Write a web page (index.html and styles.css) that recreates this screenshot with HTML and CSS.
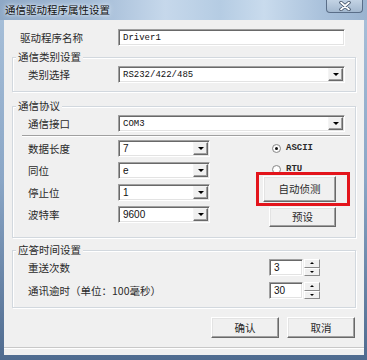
FILE: index.html
```html
<!DOCTYPE html>
<html>
<head>
<meta charset="utf-8">
<link rel="stylesheet" href="styles.css">
</head>
<body>
<div class="window">
  <div class="titlebar">
    <span class="title">通信驱动程序属性设置</span>
    <span class="close"><svg width="14" height="10" viewBox="0 0 14 10"><path d="M3 1.5 L11 8.5 M11 1.5 L3 8.5" stroke="#3a4a60" stroke-width="3.4" stroke-linecap="round"/><path d="M3 1.5 L11 8.5 M11 1.5 L3 8.5" stroke="#ffffff" stroke-width="1.8" stroke-linecap="round"/></svg></span>
  </div>
  <div class="client">
    <div class="row name-row">
      <span class="label name-label">驱动程序名称</span>
      <div class="edit wide"><span class="val mono">Driver1</span></div>
    </div>

    <div class="group g1">
      <div class="legend">通信类别设置</div>
      <div class="row">
        <span class="label">类别选择</span>
        <div class="combo wide"><span class="val mono">RS232/422/485</span><span class="drop"></span></div>
      </div>
    </div>

    <div class="group g2">
      <div class="legend">通信协议</div>
      <div class="row">
        <span class="label">通信接口</span>
        <div class="combo wide"><span class="val mono">COM3</span><span class="drop"></span></div>
      </div>
      <div class="separator"></div>
      <div class="split">
        <div class="leftcol">
          <div class="row">
            <span class="label">数据长度</span>
            <div class="combo narrow"><span class="val sans">7</span><span class="drop"></span></div>
          </div>
          <div class="row">
            <span class="label">同位</span>
            <div class="combo narrow"><span class="val sans">e</span><span class="drop"></span></div>
          </div>
          <div class="row">
            <span class="label">停止位</span>
            <div class="combo narrow"><span class="val sans">1</span><span class="drop"></span></div>
          </div>
          <div class="row">
            <span class="label">波特率</span>
            <div class="combo narrow"><span class="val sans">9600</span><span class="drop"></span></div>
          </div>
        </div>
        <div class="rightcol">
          <div class="radio-row first"><span class="radio checked"></span><span class="radio-text">ASCII</span></div>
          <div class="radio-row second"><span class="radio"></span><span class="radio-text">RTU</span></div>
          <div class="button detect">自动侦测</div>
          <div class="button preset">预设</div>
        </div>
      </div>
      <div class="highlight"></div>
    </div>

    <div class="group g3">
      <div class="legend">应答时间设置</div>
      <div class="row">
        <span class="label">重送次数</span>
        <div class="spin"><div class="spin-edit"><span class="val sans">3</span></div><div class="spin-btns"><span class="sb up"></span><span class="sb down"></span></div></div>
      </div>
      <div class="row row2">
        <span class="label">通讯逾时（单位：100毫秒）</span>
        <div class="spin"><div class="spin-edit"><span class="val sans">30</span></div><div class="spin-btns"><span class="sb up"></span><span class="sb down"></span></div></div>
      </div>
    </div>

    <div class="actions">
      <div class="button action">确认</div>
      <div class="button action">取消</div>
    </div>
    <div class="bottomline"></div>
  </div>
</div>
</body>
</html>
```

FILE: styles.css
```css
body {
  margin: 0;
  width: 367px;
  height: 360px;
  overflow: hidden;
  font-family: "Noto Sans CJK SC", "Noto Sans", sans-serif;
  font-size: 10.5px;
  color: #2a2a2a;
}

.window {
  width: 367px;
  height: 360px;
  display: flex;
  flex-direction: column;
  background: linear-gradient(180deg, #a9c1da 0%, #8aa6c6 50%, #4f6b8f 100%);
}

.titlebar {
  height: 20px;
  flex: none;
  display: flex;
  justify-content: space-between;
  align-items: flex-start;
  background: linear-gradient(90deg, #8ea8c6 0%, #a3bbd6 25%, #c6d8eb 45%, #b5cce3 60%, #c9dbed 72%, #a9c1db 88%, #9ab3cf 100%);
}

.title {
  margin-left: 5px;
  line-height: 20px;
  color: #111;
  text-shadow: 0 0 3px #eaf2fb, 0 0 6px #eaf2fb;
}

.close {
  width: 37px;
  height: 13px;
  margin-right: 4px;
  box-sizing: border-box;
  border: 1px solid #5a6e88;
  border-top: none;
  border-radius: 0 0 4px 4px;
  background: linear-gradient(180deg, #c3d3e4, #a3b8cf);
  display: flex;
  justify-content: center;
  align-items: center;
}

.client {
  flex: 1;
  margin: 0 3px 5px 4px;
  background: #f0f0f0;
  display: flex;
  flex-direction: column;
  padding: 9px 8px 0 8px;
}

.row {
  display: flex;
  align-items: center;
  height: 17px;
}

.label {
  width: 90px;
  flex: none;
  line-height: 12px;
  white-space: nowrap;
}

.name-label {
  width: 98px;
  margin-left: 8px;
}

.edit, .combo, .spin-edit {
  box-sizing: border-box;
  height: 17px;
  background: #fff;
  border: 1px solid;
  border-color: #a0a0a0 #ffffff #ffffff #a0a0a0;
  box-shadow: inset 1px 1px 0 #696969, inset -1px -1px 0 #e3e3e3;
  display: flex;
  align-items: center;
}

.wide { width: 227px; }
.narrow { width: 92px; }

.val {
  flex: 1;
  padding-left: 4px;
  line-height: 12px;
  color: #111;
}

.mono {
  font-family: "Liberation Mono", monospace;
  font-size: 9px;
}

.sans {
  font-family: "Liberation Sans", sans-serif;
  font-size: 10px;
}

.drop {
  width: 15px;
  height: 13px;
  margin-right: 1px;
  box-sizing: border-box;
  background: #f0f0f0;
  border: 1px solid;
  border-color: #f4f4f4 #696969 #696969 #f4f4f4;
  box-shadow: inset -1px -1px 0 #a0a0a0;
  display: flex;
  justify-content: center;
  align-items: center;
}

.drop::after {
  content: "";
  border-top: 3px solid #000;
  border-left: 3px solid transparent;
  border-right: 3px solid transparent;
}

.group {
  position: relative;
  border: 1px solid #d2d8de;
  box-shadow: inset 1px 1px 0 #fff, 1px 1px 0 #fff;
  padding: 0 10px 8px 15px;
}

.legend {
  width: max-content;
  margin: -7px 0 3px -12px;
  padding: 0 2px;
  background: #f0f0f0;
  line-height: 12px;
}

.g1 { margin-top: 11px; }
.g2 { margin-top: 14px; padding-bottom: 10px; }
.g3 { margin-top: 12px; }

.separator {
  margin: 3px -5px 0 -6px;
  height: 1px;
  background: #a0a0a0;
  border-bottom: 1px solid #fff;
}

.split {
  display: flex;
  margin-top: 3px;
}

.leftcol {
  display: flex;
  flex-direction: column;
  gap: 5px;
}

.rightcol {
  margin-left: 53px;
  width: 73px;
  display: flex;
  flex-direction: column;
  align-items: flex-end;
}

.radio-row {
  align-self: stretch;
  display: flex;
  align-items: center;
  height: 12px;
  padding-left: 9px;
}

.radio-row.first { margin-top: 2px; }
.radio-row.second { margin-top: 9px; }

.radio {
  width: 9px;
  height: 9px;
  box-sizing: border-box;
  border-radius: 50%;
  border: 1px solid #8a8a8a;
  background: radial-gradient(circle, #fff 40%, #e6e6e6 100%);
  display: flex;
  justify-content: center;
  align-items: center;
}

.radio.checked::after {
  content: "";
  width: 3px;
  height: 3px;
  border-radius: 50%;
  background: #111;
}

.radio-text {
  margin-left: 5px;
  font-family: "Liberation Mono", monospace;
  font-size: 9px;
  font-weight: bold;
  line-height: 12px;
}

.button {
  box-sizing: border-box;
  background: #f0f0f0;
  border: 1px solid;
  border-color: #ffffff #696969 #696969 #ffffff;
  box-shadow: inset -1px -1px 0 #a0a0a0, inset 1px 1px 0 #e3e3e3;
  display: flex;
  justify-content: center;
  align-items: center;
  line-height: 12px;
}

.detect {
  width: 73px;
  height: 26px;
  margin-top: 1px;
}

.preset {
  width: 67px;
  height: 20px;
  margin-top: 5px;
}

.highlight {
  position: absolute;
  left: 243px;
  top: 65px;
  width: 94px;
  height: 34px;
  box-sizing: border-box;
  border: 3px solid #e3141b;
}

.row2 { margin-top: 6px; }

.spin {
  margin-left: auto;
  margin-right: 25px;
  display: flex;
  height: 17px;
}

.spin-edit {
  width: 34px;
}

.spin-btns {
  width: 16px;
  display: flex;
  flex-direction: column;
  margin-left: 1px;
}

.sb {
  flex: 1;
  box-sizing: border-box;
  background: #f0f0f0;
  border: 1px solid;
  border-color: #fff #8a8a8a #8a8a8a #fff;
  display: flex;
  justify-content: center;
  align-items: center;
}

.sb.up::after {
  content: "";
  border-bottom: 2px solid #000;
  border-left: 2px solid transparent;
  border-right: 2px solid transparent;
}

.sb.down::after {
  content: "";
  border-top: 2px solid #000;
  border-left: 2px solid transparent;
  border-right: 2px solid transparent;
}

.actions {
  display: flex;
  justify-content: flex-end;
  gap: 8px;
  margin-top: 9px;
  margin-right: 1px;
}

.action {
  width: 68px;
  height: 21px;
}

.bottomline {
  margin: 9px -8px 0 -8px;
  height: 1px;
  background: #c8c8c8;
  border-bottom: 1px solid #fff;
}
```
